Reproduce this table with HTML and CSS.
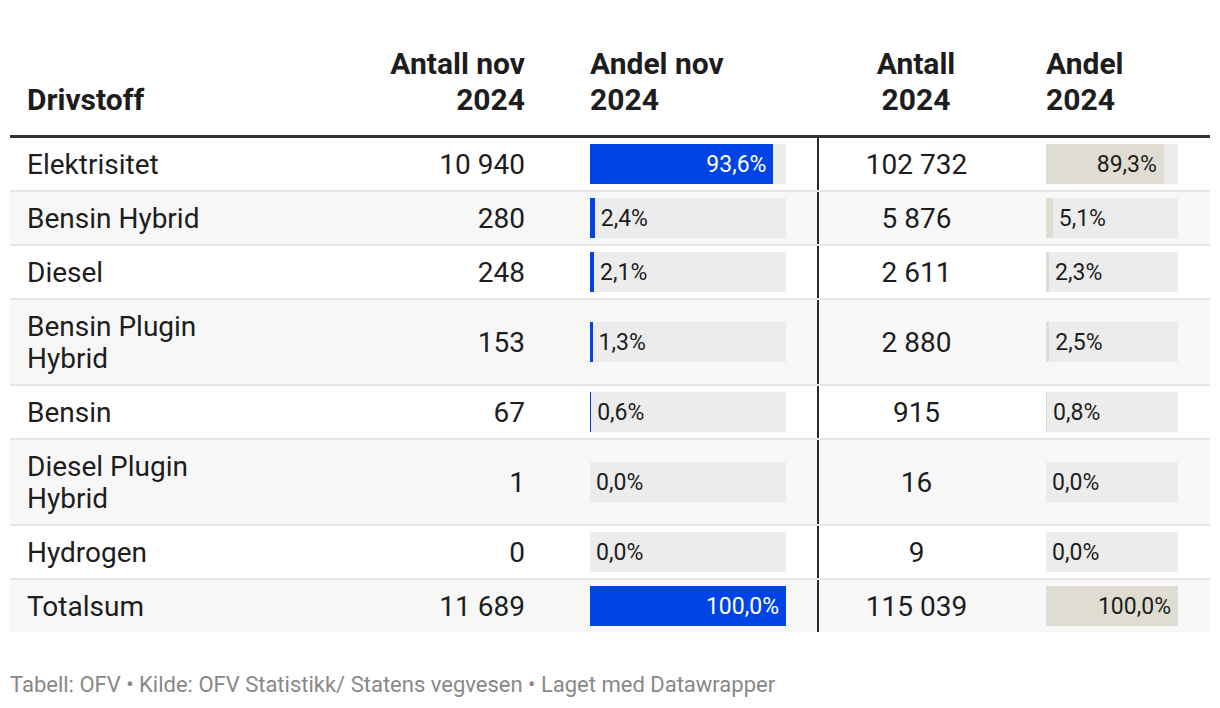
FILE: index.html
```html
<!DOCTYPE html>
<html lang="no">
<head>
<meta charset="utf-8">
<title>Drivstoff nov 2024</title>
<link rel="stylesheet" href="styles.css">
</head>
<body>
<div class="chart">
  <table class="dw">
    <colgroup>
      <col class="w1"><col class="w2"><col class="w3"><col class="w4"><col class="w5">
    </colgroup>
    <thead>
      <tr>
        <th class="c1">Drivstoff</th>
        <th class="c2">Antall nov<br>2024</th>
        <th class="c3">Andel nov<br>2024</th>
        <th class="c4">Antall<br>2024</th>
        <th class="c5">Andel<br>2024</th>
      </tr>
    </thead>
    <tbody>
      <tr>
        <td class="c1">Elektrisitet</td>
        <td class="c2">10&nbsp;940</td>
        <td class="c3"><div class="bar blue"><div class="fill" style="width:93.6%"><span class="lbl in">93,6%</span></div></div></td>
        <td class="c4">102&nbsp;732</td>
        <td class="c5"><div class="bar beige"><div class="fill" style="width:89.3%"><span class="lbl in">89,3%</span></div></div></td>
      </tr>
      <tr>
        <td class="c1">Bensin Hybrid</td>
        <td class="c2">280</td>
        <td class="c3"><div class="bar blue"><div class="fill" style="width:2.4%"></div><span class="lbl out">2,4%</span></div></td>
        <td class="c4">5&nbsp;876</td>
        <td class="c5"><div class="bar beige"><div class="fill" style="width:5.1%"></div><span class="lbl out">5,1%</span></div></td>
      </tr>
      <tr>
        <td class="c1">Diesel</td>
        <td class="c2">248</td>
        <td class="c3"><div class="bar blue"><div class="fill" style="width:2.1%"></div><span class="lbl out">2,1%</span></div></td>
        <td class="c4">2&nbsp;611</td>
        <td class="c5"><div class="bar beige"><div class="fill" style="width:2.3%"></div><span class="lbl out">2,3%</span></div></td>
      </tr>
      <tr>
        <td class="c1">Bensin Plugin<br>Hybrid</td>
        <td class="c2">153</td>
        <td class="c3"><div class="bar blue"><div class="fill" style="width:1.3%"></div><span class="lbl out">1,3%</span></div></td>
        <td class="c4">2&nbsp;880</td>
        <td class="c5"><div class="bar beige"><div class="fill" style="width:2.5%"></div><span class="lbl out">2,5%</span></div></td>
      </tr>
      <tr>
        <td class="c1">Bensin</td>
        <td class="c2">67</td>
        <td class="c3"><div class="bar blue"><div class="fill" style="width:0.6%"></div><span class="lbl out">0,6%</span></div></td>
        <td class="c4">915</td>
        <td class="c5"><div class="bar beige"><div class="fill" style="width:0.8%"></div><span class="lbl out">0,8%</span></div></td>
      </tr>
      <tr>
        <td class="c1">Diesel Plugin<br>Hybrid</td>
        <td class="c2">1</td>
        <td class="c3"><div class="bar blue"><div class="fill" style="width:0%"></div><span class="lbl out">0,0%</span></div></td>
        <td class="c4">16</td>
        <td class="c5"><div class="bar beige"><div class="fill" style="width:0%"></div><span class="lbl out">0,0%</span></div></td>
      </tr>
      <tr>
        <td class="c1">Hydrogen</td>
        <td class="c2">0</td>
        <td class="c3"><div class="bar blue"><div class="fill" style="width:0%"></div><span class="lbl out">0,0%</span></div></td>
        <td class="c4">9</td>
        <td class="c5"><div class="bar beige"><div class="fill" style="width:0%"></div><span class="lbl out">0,0%</span></div></td>
      </tr>
      <tr class="total">
        <td class="c1">Totalsum</td>
        <td class="c2">11&nbsp;689</td>
        <td class="c3"><div class="bar blue"><div class="fill" style="width:100%"><span class="lbl in">100,0%</span></div></div></td>
        <td class="c4">115&nbsp;039</td>
        <td class="c5"><div class="bar beige"><div class="fill" style="width:100%"><span class="lbl in">100,0%</span></div></div></td>
      </tr>
    </tbody>
  </table>
  <p class="footer">Tabell: OFV • Kilde: OFV Statistikk/ Statens vegvesen • Laget med Datawrapper</p>
</div>
</body>
</html>
```

FILE: styles.css
```css
html, body {
  margin: 0;
  padding: 0;
  background: #ffffff;
}

body {
  font-family: Roboto, "Liberation Sans", Arial, sans-serif;
  color: #1d1d1d;
}

.chart {
  padding: 46px 10px 0 10px;
}

.dw {
  width: 1200px;
  table-layout: fixed;
  border-collapse: collapse;
  border-spacing: 0;
}

.w1 { width: 347px; }
.w2 { width: 200px; }
.w3 { width: 261px; }
.w4 { width: 196px; }
.w5 { width: 196px; }

.dw th {
  font-size: 30px;
  font-weight: 700;
  line-height: 36px;
  color: #1d1d1d;
  vertical-align: bottom;
  padding: 0 0 17px 0;
  border-bottom: 3px solid #333333;
}

.dw td {
  font-size: 28px;
  font-weight: 400;
  line-height: 32px;
  padding: 11px 0 9px 0;
  vertical-align: middle;
  border-bottom: 2px solid #e6e6e6;
  white-space: nowrap;
}

.dw tbody tr:nth-child(even) td {
  background: #f7f7f7;
}

.dw tbody tr:last-child td {
  border-bottom: none;
}

.c1 { text-align: left; padding-left: 17px !important; }
.c2 { text-align: right; padding-right: 32px !important; }
.c3 { text-align: left; padding-left: 33px !important; }
.c4 { text-align: center; }
.c5 { text-align: left; padding-left: 32px !important; }

.dw td.c4 {
  border-left: 2px solid #2b2b2b;
}

.dw td.c3,
.dw td.c5 {
  padding-top: 6px;
  padding-bottom: 6px;
}

.bar {
  display: flex;
  align-items: center;
  height: 40px;
  background: #ececec;
}

.c3 .bar { width: 196px; }
.c5 .bar { width: 132px; }

.fill {
  height: 100%;
  display: flex;
  justify-content: flex-end;
  align-items: center;
  flex: none;
}

.blue .fill { background: #0044e5; }
.beige .fill { background: #dfddd2; }

.lbl {
  font-size: 23px;
  line-height: 26px;
  padding-top: 2px;
  white-space: nowrap;
}

.lbl.in { padding-right: 7px; }
.lbl.out { padding-left: 6px; color: #1d1d1d; }

.blue .lbl.in { color: #ffffff; }
.beige .lbl.in { color: #1d1d1d; }

.footer {
  margin: 40px 0 0 0;
  font-size: 22px;
  line-height: 26px;
  color: #888888;
}
```
